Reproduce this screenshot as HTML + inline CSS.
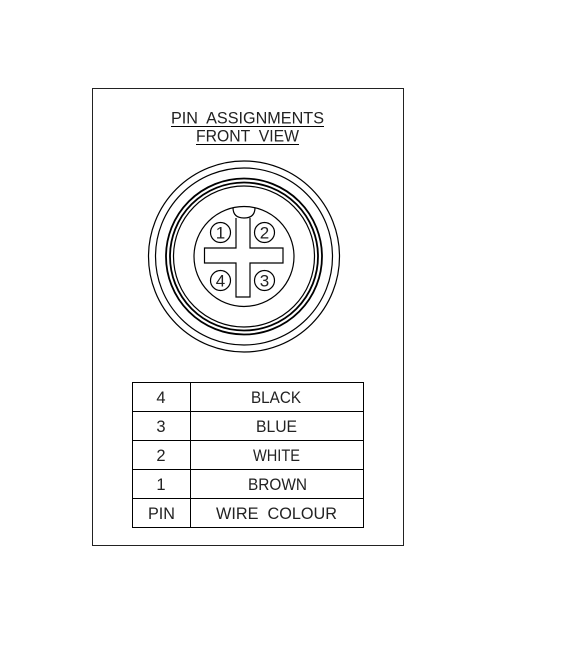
<!DOCTYPE html>
<html><head><style>html,body{margin:0;padding:0;background:#fff}svg{display:block}</style></head><body>
<svg width="566" height="650" viewBox="0 0 566 650" xmlns="http://www.w3.org/2000/svg" font-family="Liberation Sans, sans-serif" font-size="14" fill="none" stroke="#000">
<rect x="92.5" y="88.5" width="311" height="457" stroke="#222" stroke-width="1"/>
<g fill="#222" stroke="none" font-size="17">
<text x="171" y="123.5" textLength="153" lengthAdjust="spacingAndGlyphs" xml:space="preserve">PIN  ASSIGNMENTS</text>
<text x="196" y="141.5" textLength="103" lengthAdjust="spacingAndGlyphs" xml:space="preserve">FRONT  VIEW</text>
</g>
<line x1="171" y1="126.5" x2="324" y2="126.5" stroke-width="1"/>
<line x1="196" y1="144.5" x2="299" y2="144.5" stroke-width="1"/>
<g stroke-width="1.2">
<circle cx="244" cy="256.5" r="95.5"/>
<circle cx="244" cy="256.5" r="88.5"/>
<circle cx="244" cy="256.5" r="78" stroke-width="1.8"/>
<circle cx="244" cy="256.5" r="74" stroke-width="1.8"/>
<circle cx="244" cy="256.5" r="70.5"/>
<circle cx="244" cy="256.5" r="50"/>
<path d="M236 218 L236 248 L204.5 248 L204.5 263 L236 263 L236 297 L250 297 L250 263 L283 263 L283 248 L250 248 L250 218"/>
<path d="M233 207.5 Q233 218 244 218 Q255 218 255 207.5"/>
<circle cx="220.5" cy="232.5" r="10"/>
<circle cx="264.5" cy="232.5" r="10"/>
<circle cx="220.5" cy="280.5" r="10"/>
<circle cx="264.5" cy="280.5" r="10"/>
</g>
<g fill="#222" stroke="none" text-anchor="middle" font-size="17">
<text x="220.5" y="238.5">1</text>
<text x="264.5" y="238.5">2</text>
<text x="220.5" y="286.5">4</text>
<text x="264.5" y="286.5">3</text>
</g>
<g stroke-width="1">
<rect x="132.5" y="382.5" width="231" height="145"/>
<line x1="190.5" y1="382" x2="190.5" y2="528"/>
<line x1="132" y1="411.5" x2="364" y2="411.5"/>
<line x1="132" y1="440.5" x2="364" y2="440.5"/>
<line x1="132" y1="469.5" x2="364" y2="469.5"/>
<line x1="132" y1="498.5" x2="364" y2="498.5"/>
</g>
<g fill="#222" stroke="none" font-size="16.5">
<text x="161" y="403" text-anchor="middle">4</text><text x="251" y="403" textLength="50" lengthAdjust="spacingAndGlyphs">BLACK</text>
<text x="161" y="432" text-anchor="middle">3</text><text x="256" y="432" textLength="41" lengthAdjust="spacingAndGlyphs">BLUE</text>
<text x="161" y="461" text-anchor="middle">2</text><text x="253" y="461" textLength="47" lengthAdjust="spacingAndGlyphs">WHITE</text>
<text x="161" y="490" text-anchor="middle">1</text><text x="248" y="490" textLength="59" lengthAdjust="spacingAndGlyphs">BROWN</text>
<text x="148" y="519" textLength="27" lengthAdjust="spacingAndGlyphs">PIN</text><text x="216" y="519" textLength="121" lengthAdjust="spacingAndGlyphs" xml:space="preserve">WIRE  COLOUR</text>
</g>
</svg>
</body></html>
